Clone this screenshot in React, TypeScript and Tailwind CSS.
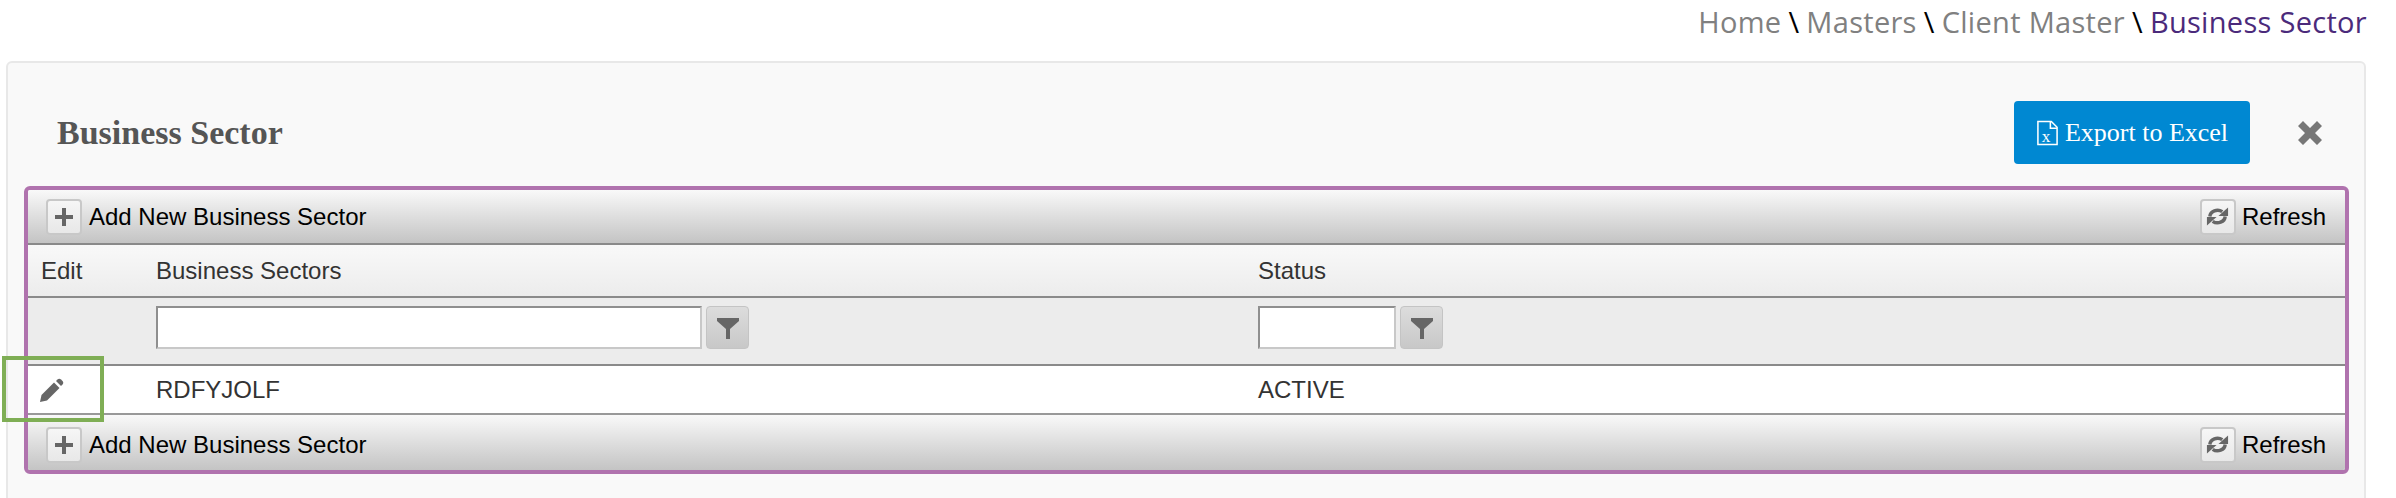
function ToolButton({ kind }: { kind: 'add' | 'refresh' }) {
  return (
    <span className="flex h-[36px] w-[36px] shrink-0 items-center justify-center rounded-[4px] border-2 border-[#c8c8c8] bg-gradient-to-b from-[#f6f6f6] to-[#e8e8e8]">
      {kind === 'add' ? (
        <svg viewBox="0 0 18 18" className="h-[18px] w-[18px]" fill="#666666">
          <path d="M7 0h4v7h7v4h-7v7H7v-7H0V7h7z" />
        </svg>
      ) : (
        <svg viewBox="0 0 24 24" className="h-[23px] w-[23px]">
          <path d="M4 12a8 7 0 0 1 13-5" fill="none" stroke="#666666" strokeWidth="3.6" />
          <path d="M13 11.5h10V2.5z" fill="#666666" />
          <path d="M20 12a8 7 0 0 1-13 5" fill="none" stroke="#666666" strokeWidth="3.6" />
          <path d="M11 12.5H1v9z" fill="#666666" />
        </svg>
      )}
    </span>
  )
}

function Toolbar({ className }: { className: string }) {
  return (
    <div className={`flex items-center justify-between bg-gradient-to-b from-[#f9f9f9] to-[#c4c4c4] pl-[18px] pr-[19px] text-[24px] text-black ${className}`}>
      <div className="flex items-center gap-[7px]">
        <ToolButton kind="add" />
        <span>Add New Business Sector</span>
      </div>
      <div className="flex items-center gap-[6px]">
        <ToolButton kind="refresh" />
        <span>Refresh</span>
      </div>
    </div>
  )
}

function FilterBox({ width }: { width: string }) {
  return (
    <div className="flex items-center gap-[4px]">
      <input className={`h-[43px] border-2 border-[#8f8f8f] border-b-[#c8c8c8] border-r-[#c8c8c8] bg-white ${width}`} />
      <span className="flex h-[43px] w-[43px] items-center justify-center rounded-[4px] border border-[#c4c4c4] bg-gradient-to-b from-[#dcdcdc] to-[#c8c8c8]">
        <svg viewBox="0 0 24 24" className="h-[24px] w-[24px]" fill="#666666">
          <path d="M1 2h22v3l-9 8v10h-4V13L1 5z" />
        </svg>
      </span>
    </div>
  )
}

export default function App() {
  return (
    <div className="h-[498px] w-[2396px] overflow-hidden bg-white font-['Liberation_Sans',sans-serif]">
      <div className="flex h-[61px] justify-end gap-[7px] pr-[29px] pt-[4px] font-['Open_Sans',sans-serif] text-[29px] leading-[36px] tracking-[0.3px] text-[#808080]">
        <span>Home</span>
        <span className="text-black">\</span>
        <span>Masters</span>
        <span className="text-black">\</span>
        <span>Client Master</span>
        <span className="text-black">\</span>
        <span className="text-[#4b2a7b]">Business Sector</span>
      </div>

      <div className="relative ml-[6px] h-[460px] w-[2360px] rounded-t-[6px] border-2 border-[#e8e8e8] bg-[#f9f9f9] pl-[16px] pr-[15px]">
        <div className="flex h-[123px] items-start justify-between pt-[38px]">
          <h1 className="pl-[33px] font-['Liberation_Serif',serif] text-[34px] font-bold leading-[63px] text-[#555555]">Business Sector</h1>
          <div className="flex items-center">
            <button className="flex h-[63px] w-[236px] items-center justify-center gap-[6px] rounded-[4px] bg-[#0088d2] font-['Liberation_Serif',serif] text-[26px] text-white">
              <svg viewBox="0 0 24 26" className="h-[26px] w-[23px]" fill="none" stroke="white" strokeWidth="1.6">
                <path d="M2 1h14l6 6v18H2z" />
                <path d="M15 1v7h7" />
                <text x="6" y="22" fontSize="18" fill="white" stroke="none" fontFamily="Liberation Serif">x</text>
              </svg>
              Export to Excel
            </button>
            <span className="ml-[47px] mr-[26px] flex h-[26px] w-[26px] items-center justify-center">
              <svg viewBox="0 0 26 26" className="h-[26px] w-[26px]" fill="#777777">
                <path d="M1 6l5-5 7 7 7-7 5 5-7 7 7 7-5 5-7-7-7 7-5-5 7-7z" />
              </svg>
            </span>
          </div>
        </div>

        <div className="overflow-hidden rounded-[6px] border-4 border-[#b073ae]">
          <Toolbar className="h-[53px]" />
          <div className="flex h-[55px] items-center border-y-2 border-y-[#8a8a8a] bg-gradient-to-b from-[#f9f9f9] to-[#ececec] text-[24px] text-[#333333]">
            <div className="w-[128px] pl-[13px]">Edit</div>
            <div className="w-[1102px]">Business Sectors</div>
            <div>Status</div>
          </div>
          <div className="flex h-[68px] items-start border-b-2 border-b-[#8a8a8a] bg-[#ececec] pt-[8px]">
            <div className="w-[128px]" />
            <div className="w-[1102px]"><FilterBox width="w-[546px]" /></div>
            <FilterBox width="w-[138px]" />
          </div>
          <div className="flex h-[49px] items-center border-b-2 border-b-[#999999] bg-white text-[24px] text-[#333333]">
            <div className="w-[128px] pl-[12px]">
              <svg viewBox="0 0 24 24" className="h-[24px] w-[24px]" fill="#666666">
                <path d="M0 24l1.5-7L14 4.5 19.5 10 7 22.5z" />
                <path d="M16 3l1.5-1.5c1-1 2.5-1 3.5 0l1.5 1.5c1 1 1 2.5 0 3.5L21 8z" />
              </svg>
            </div>
            <div className="w-[1102px]">RDFYJOLF</div>
            <div>ACTIVE</div>
          </div>
          <Toolbar className="h-[55px] pt-[4px]" />
        </div>

        <div className="absolute left-[-6px] top-[293px] h-[66px] w-[102px] border-4 border-[#7fae55]" />
      </div>
    </div>
  )
}
